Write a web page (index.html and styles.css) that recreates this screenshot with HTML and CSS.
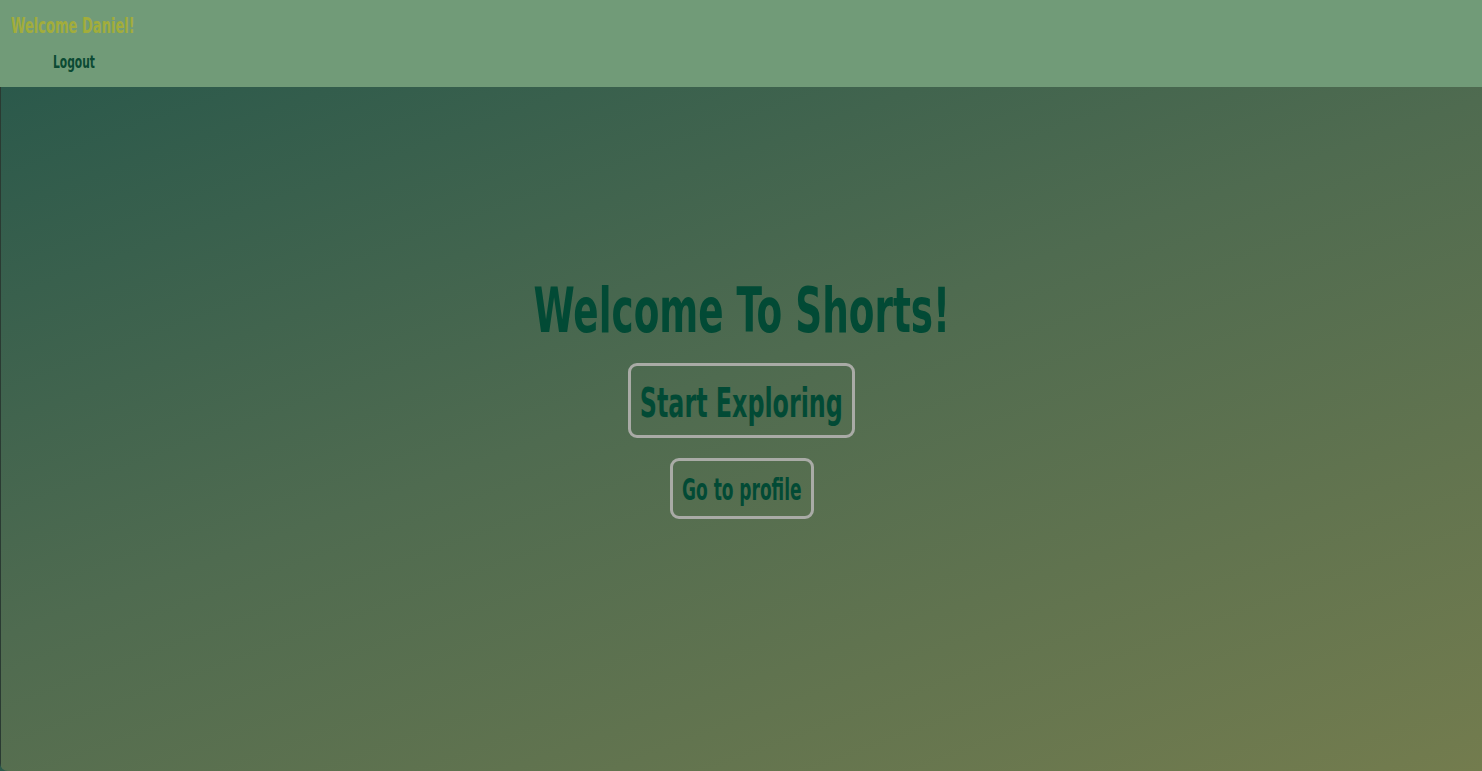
FILE: index.html
```html
<!DOCTYPE html>
<html lang="en">
<head>
<meta charset="utf-8">
<title>Shorts</title>
<link rel="stylesheet" href="styles.css">
</head>
<body>
<div class="app">
  <header class="topbar">
    <div class="greeting"><span class="squeeze left">Welcome Daniel!</span></div>
    <nav class="nav"><a class="logout" href="#"><span class="squeeze left">Logout</span></a></nav>
  </header>
  <main class="hero">
    <h1 class="title"><span class="squeeze">Welcome To Shorts!</span></h1>
    <a class="btn btn-large" href="#"><span class="squeeze">Start Exploring</span></a>
    <a class="btn btn-small" href="#"><span class="squeeze">Go to profile</span></a>
  </main>
</div>
</body>
</html>
```
FILE: styles.css
```css
* { box-sizing: border-box; }
html, body { margin: 0; padding: 0; height: 100%; }
body {
  font-family: "DejaVu Sans Condensed", "DejaVu Sans", sans-serif;
  font-weight: 700;
  background: #2c5a4b;
}
.squeeze {
  display: inline-block;
  white-space: nowrap;
  transform: scaleX(0.66);
  transform-origin: center;
}
.squeeze.left { transform-origin: left center; }
.app {
  height: 771px;
  display: flex;
  flex-direction: column;
  overflow: hidden;
  border-bottom-left-radius: 8px;
}
.topbar {
  height: 87px;
  background: #719b78;
  padding: 14px 0 0 11px;
  flex: none;
}
.greeting {
  color: #a2ad3b;
  font-size: 22px;
  line-height: 24px;
}
.nav { padding: 13px 0 0 42px; }
.logout {
  display: block;
  color: #0b4a33;
  font-size: 18px;
  line-height: 22px;
  text-decoration: none;
}
.hero {
  flex: 1;
  background: linear-gradient(160deg, #2b594b 0%, #4f6b50 45%, #737c4e 100%);
  border-left: 1px solid #2a3a32;
  display: flex;
  flex-direction: column;
  align-items: center;
  padding-top: 184px;
}
.title {
  margin: 0;
  color: #024a35;
  font-size: 62px;
  line-height: 80px;
  font-weight: 700;
  width: 900px;
  text-align: center;
}
.title .squeeze { transform: scaleX(0.67); }
.btn {
  color: #024a35;
  text-decoration: none;
  border: 3px solid #a9aba6;
  border-radius: 9px;
  display: flex;
  justify-content: center;
}
.btn-large {
  margin-top: 12px;
  width: 227px;
  font-size: 41px;
  line-height: 48px;
  padding: 13px 0 8px;
}
.btn-large .squeeze { transform: scaleX(0.645); }
.btn-small {
  margin-top: 20px;
  width: 144px;
  font-size: 30px;
  line-height: 34px;
  padding: 12px 0 9px;
}
.btn-small .squeeze { transform: scaleX(0.63); }
```
